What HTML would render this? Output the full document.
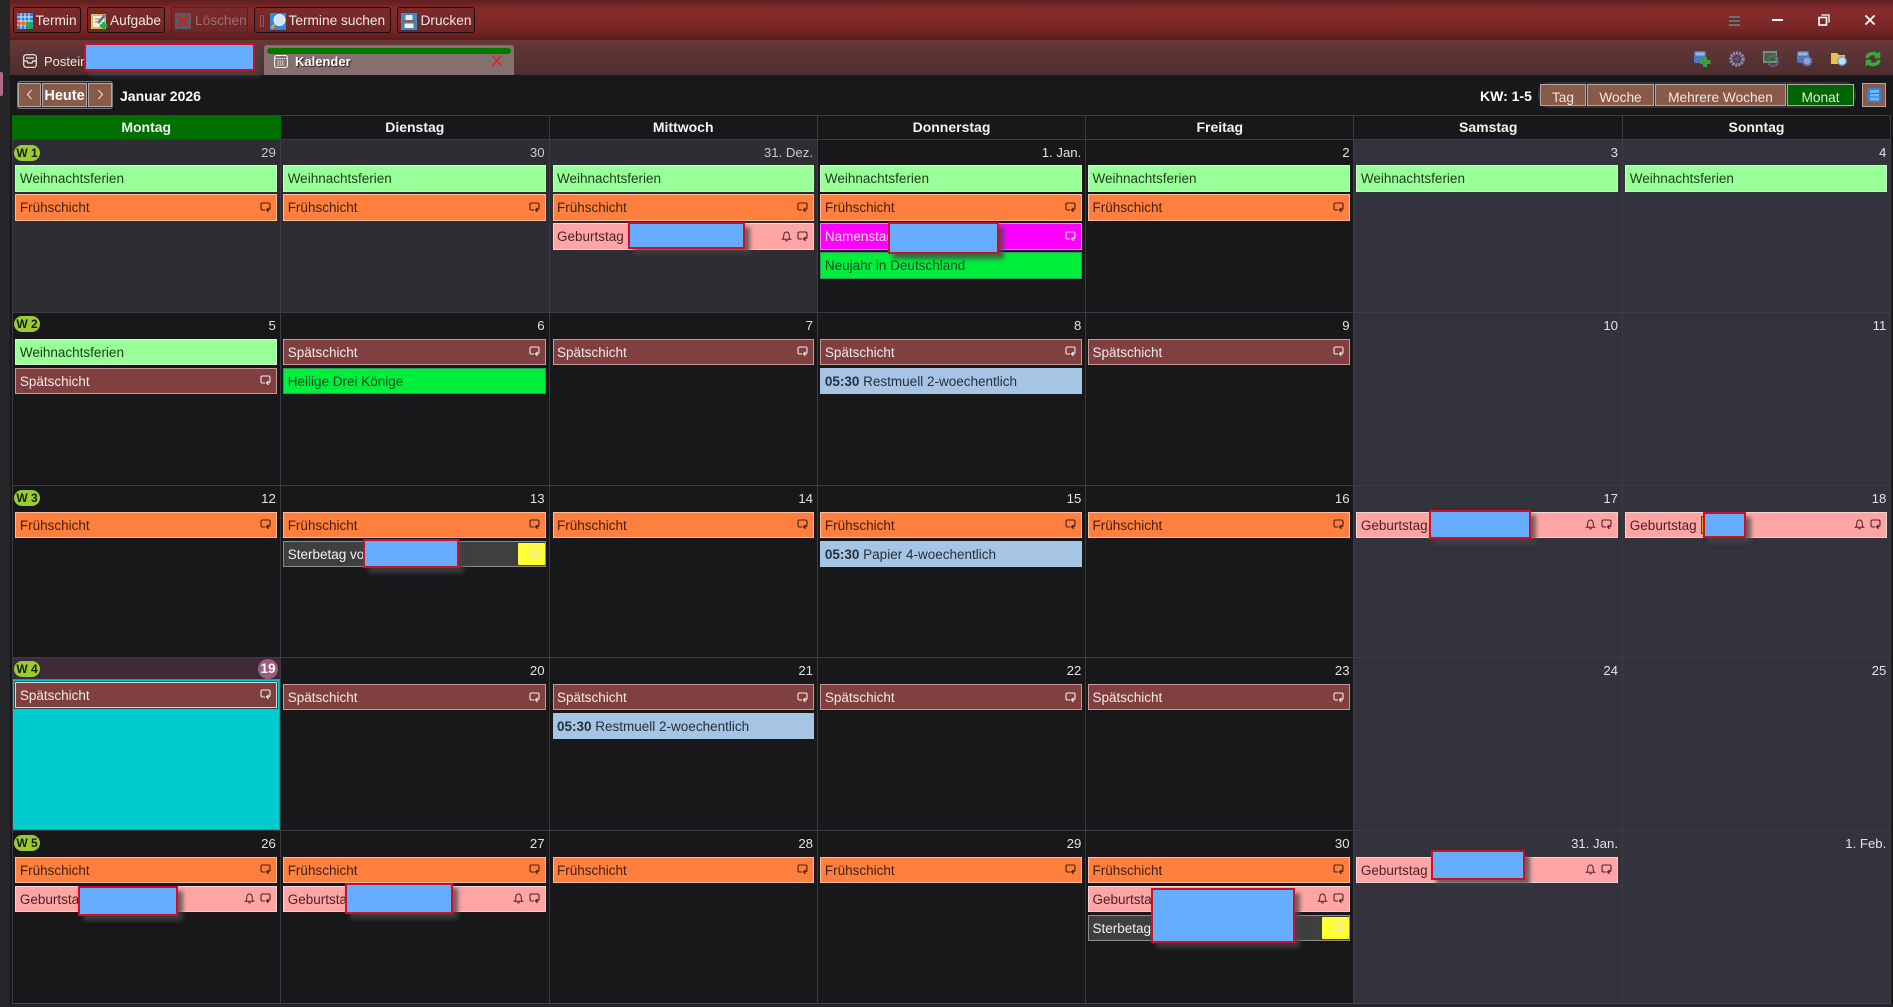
<!DOCTYPE html>
<html lang="de">
<head>
<meta charset="utf-8">
<title>Kalender</title>
<style>
html,body{margin:0;padding:0;width:1893px;height:1007px;overflow:hidden;background:#18181b}
body{position:relative;font-family:"Liberation Sans",sans-serif;font-size:13.5px;color:#eee}
div,span,svg{position:absolute;box-sizing:border-box}
b{font-weight:bold}
.tb{top:7px;height:26px;border:1px solid #1e0d0d;border-radius:3px;background:linear-gradient(#7b2a2a,#6e2626);color:#f4e6e6;line-height:26px;white-space:nowrap;font-size:13.7px}
.tb span{top:0}
.v{top:84px;height:22px;background:#8a5a48;border:1px solid #b0a8a4;color:#f0e4de;text-align:center;line-height:25px;font-size:13.7px}
.h{top:116px;height:23px;font-weight:bold;font-size:14px;text-align:center;line-height:23px;color:#f2f2f2;width:268.4px}
.l{background:#3b3b40}
.vl{top:115px;width:1px;height:888px}
.hl{left:12px;width:1879px;height:1px}
.d{height:16px;width:120px;text-align:right;line-height:16px;color:#e2e2e2;font-size:13.2px}
.dm{color:#cacaca}
.w{left:14px;width:26px;height:16px;border-radius:8px;background:#9acb34;color:#142000;font-weight:bold;font-size:12px;line-height:16.5px;text-align:center}
.e{height:26.4px;border:1px solid;padding-left:3.5px;line-height:26.5px;white-space:nowrap;overflow:hidden;font-size:13.5px}
.c1{left:15.4px;width:261.6px}.c2{left:283.2px;width:262.5px}.c3{left:552.5px;width:261.1px}.c4{left:820.4px;width:261.4px}.c5{left:1088px;width:261.6px}.c6{left:1356.4px;width:261.6px}.c7{left:1625.3px;width:261.4px}
.g{background:#99ff99;border-color:#cdf5cd;color:#1d3d1d}
.f{background:#ff7f3f;border-color:#ffbb99;color:#43200f}
.p{background:#ffa5a5;border-color:#f6d2d2;color:#4a2228}
.s{background:#804040;border-color:#c49a9a;color:#f6e8e8}
.n{background:#00ee3c;border-color:#2e9c58;color:#0c4a24}
.b{background:#a6c4e4;border-color:#a6c4e4;color:#26303c}
.m{background:#ff00ff;border-color:#ff77ff;color:#ffd8ff}
.t{background:#3f3f3f;border-color:#8c8c8c;color:#f0f0f0}
.y{right:0;top:1px;width:27px;height:22.4px;background:#ffff33;border-radius:1px}
.r{width:11px;height:11px;right:5px;top:6.5px;fill:none;stroke:currentColor;stroke-width:1.1}
.bl{width:11px;height:11px;right:21px;top:6.5px;fill:none;stroke:currentColor;stroke-width:1}
.x{background:#66adff;border:2px solid #cc1126;box-shadow:5px 5px 4px rgba(70,70,70,.75);z-index:5}
</style>
</head>
<body>
<svg width="0" height="0" style="position:absolute">
<symbol id="rp" viewBox="0 0 11 11"><path d="M5 8H2.500Q1 8 1 6.500V2.500Q1 1 2.500 1H8.500Q10 1 10 2.500V6Q10 7.900 8 7.900H6.600M8.600 5.900L6.400 7.900L8.600 9.900"/></symbol>
<symbol id="bl" viewBox="0 0 11 11"><path d="M1.500 8.300Q2.800 7.300 2.800 4.800Q2.800 1 5.500 1Q8.200 1 8.200 4.800Q8.200 7.300 9.500 8.300ZM4.300 9.300Q5.500 10.700 6.700 9.300"/></symbol>
</svg>

<!-- left strip -->
<div style="left:0;top:0;width:10px;height:1007px;background:#262628"></div>
<div style="left:0;top:72px;width:3px;height:24px;background:#b06a8a;border-radius:0 2px 2px 0"></div>

<!-- title bar -->
<div style="left:10px;top:0;width:1883px;height:40px;background:linear-gradient(#5e1f1f 0,#852c2b 25%,#7c2828 65%,#5c1c1c 100%)"></div>
<div class="tb" style="left:13px;width:68px"><span style="left:21.500px">Termin</span></div>
<svg style="left:17px;top:13px" width="17" height="17" viewBox="0 0 17 17"><rect width="16" height="16" fill="#2d7fd6"/><path d="M0 4H16M0 8H16M0 12H16M4 0V16M8 0V16M12 0V16" stroke="#dcecff" stroke-width="1"/><rect x="1" y="9" width="3" height="3" fill="#e8662a"/><rect x="5" y="9" width="3" height="3" fill="#e8662a"/><path d="M12.500 8.500V16M8.800 12.300H16.300" stroke="#20b040" stroke-width="3"/></svg>
<div class="tb" style="left:87px;width:78px"><span style="left:22px">Aufgabe</span></div>
<svg style="left:91px;top:13px" width="17" height="17" viewBox="0 0 17 17"><rect x="0" y="1" width="15" height="15" fill="#d9b95a"/><rect x="2" y="3" width="11" height="11" fill="#f2ecd8"/><path d="M4 6H10M4 9H8" stroke="#888"/><path d="M7 10L14 2" stroke="#50789c" stroke-width="2.500"/><path d="M12.500 9V16.500M8.800 12.800H16.300" stroke="#20b040" stroke-width="3"/></svg>
<div class="tb" style="left:171px;width:76.500px;border-color:#5a2020;color:#9a7070"><span style="left:23px">Löschen</span></div>
<svg style="left:175px;top:13px" width="16" height="16" viewBox="0 0 16 16"><rect width="16" height="16" fill="#5a5a68"/><path d="M2.500 2.500L13.500 13.500M13.500 2.500L2.500 13.500" stroke="#a83030" stroke-width="3.200"/></svg>
<div class="tb" style="left:254px;width:137px"><span style="left:33.500px">Termine suchen</span></div>
<div style="left:260px;top:15px;width:4px;height:12px;border:1px solid #8c5a5a;border-radius:1px"></div>
<svg style="left:270px;top:13px" width="16" height="17" viewBox="0 0 16 17"><rect width="16" height="17" fill="#2f8ae0"/><circle cx="9.500" cy="7" r="5.500" fill="#cfe6fb" stroke="#e8f4ff"/><path d="M5 11L1.500 15.500" stroke="#e0a040" stroke-width="2.500"/></svg>
<div class="tb" style="left:397px;width:78px"><span style="left:22.500px">Drucken</span></div>
<svg style="left:401px;top:13px" width="16" height="17" viewBox="0 0 16 17"><rect width="16" height="17" fill="#3b8ccc"/><rect x="4.500" y="2" width="7" height="5" fill="#e8e8e8"/><rect x="1.500" y="7" width="13" height="6" fill="#6e6e70"/><rect x="3.500" y="10.500" width="9" height="4.500" fill="#f2f2f2"/></svg>

<!-- window controls -->
<div style="left:1729px;top:16px;width:11px;height:10px;background:repeating-linear-gradient(#7a6a6a 0,#7a6a6a 2px,#5a3030 2px,#5a3030 4px)"></div>
<div style="left:1772px;top:19px;width:11px;height:2px;background:#fff"></div>
<svg style="left:1818px;top:14px" width="12" height="12" viewBox="0 0 12 12"><rect x="1" y="3.500" width="7.500" height="7.500" fill="none" stroke="#fff" stroke-width="1.600"/><path d="M3.500 1H11V8.500" fill="none" stroke="#fff" stroke-width="1.300"/></svg>
<svg style="left:1864px;top:14px" width="12" height="12" viewBox="0 0 12 12"><path d="M1.500 1.500L10.500 10.500M10.500 1.500L1.500 10.500" stroke="#fff" stroke-width="1.800"/></svg>

<!-- tab bar -->
<div style="left:10px;top:40px;width:1883px;height:35px;background:linear-gradient(#683838,#4c2e2e)"></div>
<svg style="left:23px;top:54px" width="14" height="14" viewBox="0 0 14 14" fill="none" stroke="#eee" stroke-width="1.200"><rect x=".7" y=".7" width="12.600" height="12.600" rx="2.500"/><path d="M.7 7H4L5 9H9L10 7H13.300M3 4H11"/></svg>
<div style="left:44px;top:54px;line-height:15px;color:#f2e6e6;font-size:13px;white-space:nowrap">Postein</div>
<div class="x" style="left:84px;top:43px;width:171px;height:28px"></div>
<div style="left:264px;top:45px;width:249.600px;height:30px;background:#86706f;border-radius:3px 3px 0 0"></div>
<div style="left:267px;top:48px;width:244px;height:6px;background:#007800;border-radius:3px"></div>
<svg style="left:274px;top:54px" width="14" height="14" viewBox="0 0 14 14" fill="none" stroke="#f2f2f2" stroke-width="1.100"><rect x=".6" y="1.500" width="12.800" height="12" rx="2"/><path d="M.6 4.500H13.400M3.500 7H10.500M3.500 9H10.500M3.500 11H10.500" stroke-dasharray="1.500 .8"/></svg>
<div style="left:295px;top:54px;line-height:16px;font-weight:bold;color:#fff;font-size:13px;text-shadow:1px 1px 1px #2a1a1a;white-space:nowrap">Kalender</div>
<svg style="left:492px;top:55px" width="10" height="11" viewBox="0 0 10 11"><path d="M.5 .5L9.500 10.500M9.500 .5L.5 10.500" stroke="#e02020" stroke-width="1.400"/></svg>

<!-- right tab icons -->
<svg style="left:1694px;top:51px" width="18" height="16" viewBox="0 0 18 16"><rect width="12" height="12" rx="2" fill="#4a7cc4"/><rect x="1.500" y="1.500" width="9" height="3" fill="#9ab8e2"/><path d="M8 6H13V9H16.500V13H13V16H9V13H6V9H8Z" fill="#3f9a4a"/></svg>
<svg style="left:1729px;top:51px" width="16" height="16" viewBox="0 0 16 16"><circle cx="8" cy="8" r="6" fill="none" stroke="#8f86b0" stroke-width="3.500" stroke-dasharray="2.200 .8"/><circle cx="8" cy="8" r="2.800" fill="#5a5280"/></svg>
<svg style="left:1763px;top:51px" width="16" height="16" viewBox="0 0 16 16"><rect width="14" height="12" fill="#6a9a70"/><rect x="1.500" y="2" width="11" height="8" fill="#3f6048"/><circle cx="10" cy="10" r="5" fill="none" stroke="#6a6488" stroke-width="2.500" stroke-dasharray="2 .8"/></svg>
<svg style="left:1797px;top:51px" width="16" height="16" viewBox="0 0 16 16"><rect width="12" height="12" rx="2" fill="#4a7cc4"/><rect x="1.500" y="1.500" width="9" height="3" fill="#9ab8e2"/><circle cx="10" cy="10" r="4.500" fill="#7fa4d8" stroke="#6c6490" stroke-width="2.200" stroke-dasharray="2 .8"/></svg>
<svg style="left:1831px;top:51px" width="17" height="16" viewBox="0 0 17 16"><path d="M0 2H6L8 4H14V13H0Z" fill="#e8c050"/><circle cx="11" cy="10" r="4.200" fill="#bfe0f8" stroke="#6da0cc" stroke-width="1.300"/></svg>
<svg style="left:1865px;top:51px" width="16" height="16" viewBox="0 0 16 16" fill="none" stroke="#2fae3f" stroke-width="3.500"><path d="M2 7Q3 2.500 8 2.500Q11 2.500 13 5"/><path d="M14 9Q13 13.500 8 13.500Q5 13.500 3 11"/><path d="M14.500 1V6.500H9.500M1.500 15V9.500H6.500" stroke-width="1.500" fill="#2fae3f"/></svg>

<!-- nav row -->
<div style="left:17px;top:81px;width:96px;height:28px;border:1px solid #77777c;border-radius:3px;background:#2a2a2e"></div>
<div class="v" style="left:17.500px;width:23px;top:83px;height:24px"><svg style="left:7px;top:5px" width="7" height="11" viewBox="0 0 7 11"><path d="M5.500 1L1.500 5.500L5.500 10" fill="none" stroke="#f0e0dc" stroke-width="1"/></svg></div>
<div class="v" style="left:42px;width:45px;top:83px;height:24px;font-weight:bold;color:#fff;line-height:24px;font-size:14.500px">Heute</div>
<div class="v" style="left:88px;width:24px;top:83px;height:24px"><svg style="left:8px;top:5px" width="7" height="11" viewBox="0 0 7 11"><path d="M1.500 1L5.500 5.500L1.500 10" fill="none" stroke="#f0e0dc" stroke-width="1"/></svg></div>
<div style="left:120px;top:88px;line-height:16px;font-weight:bold;color:#fff;font-size:14px;white-space:nowrap">Januar 2026</div>

<div style="left:1480px;top:88px;line-height:16px;font-weight:bold;color:#fff;font-size:14px;white-space:nowrap">KW: 1-5</div>
<div style="left:1538px;top:82px;width:318px;height:26px;border-radius:11px;background:#333336"></div>
<div class="v" style="left:1540px;width:46px">Tag</div>
<div class="v" style="left:1587px;width:67px">Woche</div>
<div class="v" style="left:1655px;width:131px">Mehrere Wochen</div>
<div class="v" style="left:1787px;width:67px;background:#006400;color:#d8f0d8">Monat</div>
<div class="v" style="left:1862px;width:24px;top:83px;height:24px"></div>
<svg style="left:1867px;top:88px" width="14" height="14" viewBox="0 0 14 14"><rect width="14" height="14" rx="3" fill="#2c84e8"/><path d="M3 2H12V12.500H3" fill="#6cb8f8"/><path d="M3 5.500H12M3 9H12" stroke="#2a78d8"/></svg>

<!-- grid backgrounds -->
<div style="left:12px;top:139.300px;width:805.300px;height:173px;background:#2d2d33"></div>
<div style="left:1354px;top:139.300px;width:537px;height:864px;background:#33333d"></div>

<!-- today -->
<div style="left:12px;top:657.600px;width:268.600px;height:21.400px;background:#3f2a38"></div>
<div style="left:12px;top:679px;width:267.500px;height:150.500px;background:#00ccd0;border:1px solid #3a8f94"></div>

<!-- grid lines -->
<div class="hl l" style="top:115px"></div>
<div class="hl l" style="top:139px"></div>
<div class="hl l" style="top:312px"></div>
<div class="hl l" style="top:485px"></div>
<div class="hl l" style="top:657px"></div>
<div class="hl l" style="top:830px"></div>
<div class="hl" style="top:1003px;background:#46464c;height:1px"></div>
<div style="left:10px;top:1004px;width:1883px;height:3px;background:#242428"></div>
<div class="vl l" style="left:12px"></div>
<div class="vl l" style="left:280px"></div>
<div class="vl l" style="left:549px"></div>
<div class="vl l" style="left:817px"></div>
<div class="vl l" style="left:1085px"></div>
<div class="vl l" style="left:1353px"></div>
<div class="vl l" style="left:1622px"></div>
<div class="vl l" style="left:1890px"></div>

<!-- headers -->
<div style="left:12px;top:116px;width:268.600px;height:23px;background:#007000"></div>
<div class="h" style="left:12px">Montag</div>
<div class="h" style="left:280.600px">Dienstag</div>
<div class="h" style="left:549px">Mittwoch</div>
<div class="h" style="left:817.300px">Donnerstag</div>
<div class="h" style="left:1085.600px">Freitag</div>
<div class="h" style="left:1354px">Samstag</div>
<div class="h" style="left:1622.300px">Sonntag</div>

<!-- week badges -->
<div class="w" style="top:145px">W 1</div>
<div class="w" style="top:316px">W 2</div>
<div class="w" style="top:490px">W 3</div>
<div class="w" style="top:661px">W 4</div>
<div class="w" style="top:835px">W 5</div>

<!-- dates row 1 -->
<div class="d dm" style="left:155.800px;top:145px">29</div>
<div class="d dm" style="left:424.600px;top:145px">30</div>
<div class="d dm" style="left:693px;top:145px">31. Dez.</div>
<div class="d" style="left:961.300px;top:145px">1. Jan.</div>
<div class="d" style="left:1229.600px;top:145px">2</div>
<div class="d" style="left:1498px;top:145px">3</div>
<div class="d" style="left:1766.300px;top:145px">4</div>
<!-- row 2 -->
<div class="d" style="left:155.800px;top:318px">5</div>
<div class="d" style="left:424.600px;top:318px">6</div>
<div class="d" style="left:693px;top:318px">7</div>
<div class="d" style="left:961.300px;top:318px">8</div>
<div class="d" style="left:1229.600px;top:318px">9</div>
<div class="d" style="left:1498px;top:318px">10</div>
<div class="d" style="left:1766.300px;top:318px">11</div>
<!-- row 3 -->
<div class="d" style="left:155.800px;top:491px">12</div>
<div class="d" style="left:424.600px;top:491px">13</div>
<div class="d" style="left:693px;top:491px">14</div>
<div class="d" style="left:961.300px;top:491px">15</div>
<div class="d" style="left:1229.600px;top:491px">16</div>
<div class="d" style="left:1498px;top:491px">17</div>
<div class="d" style="left:1766.300px;top:491px">18</div>
<!-- row 4 -->
<div style="left:258px;top:659px;width:20px;height:20px;border-radius:50%;background:#9c5c7f;color:#fff;font-weight:bold;font-size:13.500px;line-height:20px;text-align:center">19</div>
<div class="d" style="left:424.600px;top:663px">20</div>
<div class="d" style="left:693px;top:663px">21</div>
<div class="d" style="left:961.300px;top:663px">22</div>
<div class="d" style="left:1229.600px;top:663px">23</div>
<div class="d" style="left:1498px;top:663px">24</div>
<div class="d" style="left:1766.300px;top:663px">25</div>
<!-- row 5 -->
<div class="d" style="left:155.800px;top:836px">26</div>
<div class="d" style="left:424.600px;top:836px">27</div>
<div class="d" style="left:693px;top:836px">28</div>
<div class="d" style="left:961.300px;top:836px">29</div>
<div class="d" style="left:1229.600px;top:836px">30</div>
<div class="d" style="left:1498px;top:836px">31. Jan.</div>
<div class="d" style="left:1766.300px;top:836px">1. Feb.</div>

<!-- events row 1 -->
<div class="e c1 g" style="top:165.300px">Weihnachtsferien</div>
<div class="e c2 g" style="top:165.300px">Weihnachtsferien</div>
<div class="e c3 g" style="top:165.300px">Weihnachtsferien</div>
<div class="e c4 g" style="top:165.300px">Weihnachtsferien</div>
<div class="e c5 g" style="top:165.300px">Weihnachtsferien</div>
<div class="e c6 g" style="top:165.300px">Weihnachtsferien</div>
<div class="e c7 g" style="top:165.300px">Weihnachtsferien</div>
<div class="e c1 f" style="top:194.300px">Frühschicht<svg class="r"><use href="#rp"/></svg></div>
<div class="e c2 f" style="top:194.300px">Frühschicht<svg class="r"><use href="#rp"/></svg></div>
<div class="e c3 f" style="top:194.300px">Frühschicht<svg class="r"><use href="#rp"/></svg></div>
<div class="e c4 f" style="top:194.300px">Frühschicht<svg class="r"><use href="#rp"/></svg></div>
<div class="e c5 f" style="top:194.300px">Frühschicht<svg class="r"><use href="#rp"/></svg></div>
<div class="e c3 p" style="top:223.300px">Geburtstag<svg class="bl"><use href="#bl"/></svg><svg class="r"><use href="#rp"/></svg></div>
<div class="e c4 m" style="top:223.300px">Namenstag<svg class="r"><use href="#rp"/></svg></div>
<div class="e c4 n" style="top:252.300px">Neujahr in Deutschland</div>

<!-- events row 2 -->
<div class="e c1 g" style="top:338.500px">Weihnachtsferien</div>
<div class="e c2 s" style="top:338.500px">Spätschicht<svg class="r"><use href="#rp"/></svg></div>
<div class="e c3 s" style="top:338.500px">Spätschicht<svg class="r"><use href="#rp"/></svg></div>
<div class="e c4 s" style="top:338.500px">Spätschicht<svg class="r"><use href="#rp"/></svg></div>
<div class="e c5 s" style="top:338.500px">Spätschicht<svg class="r"><use href="#rp"/></svg></div>
<div class="e c1 s" style="top:367.500px">Spätschicht<svg class="r"><use href="#rp"/></svg></div>
<div class="e c2 n" style="top:367.500px">Heilige Drei Könige</div>
<div class="e c4 b" style="top:367.500px"><b>05:30</b> Restmuell 2-woechentlich</div>

<!-- events row 3 -->
<div class="e c1 f" style="top:511.500px">Frühschicht<svg class="r"><use href="#rp"/></svg></div>
<div class="e c2 f" style="top:511.500px">Frühschicht<svg class="r"><use href="#rp"/></svg></div>
<div class="e c3 f" style="top:511.500px">Frühschicht<svg class="r"><use href="#rp"/></svg></div>
<div class="e c4 f" style="top:511.500px">Frühschicht<svg class="r"><use href="#rp"/></svg></div>
<div class="e c5 f" style="top:511.500px">Frühschicht<svg class="r"><use href="#rp"/></svg></div>
<div class="e c6 p" style="top:511.500px">Geburtstag<svg class="bl"><use href="#bl"/></svg><svg class="r"><use href="#rp"/></svg></div>
<div class="e c7 p" style="top:511.500px">Geburtstag<svg class="bl"><use href="#bl"/></svg><svg class="r"><use href="#rp"/></svg></div>
<div class="e c2 t" style="top:540.500px">Sterbetag von<div class="y"></div><svg class="r" style="color:#e4e4d4;z-index:1;stroke-width:1.300"><use href="#rp"/></svg></div>
<div class="e c4 b" style="top:540.500px"><b>05:30</b> Papier 4-woechentlich</div>

<!-- events row 4 -->
<div class="e c1 s" style="top:681.700px;border-color:#d8d8d8;outline:1px solid #274f52">Spätschicht<svg class="r"><use href="#rp"/></svg></div>
<div class="e c2 s" style="top:684px">Spätschicht<svg class="r"><use href="#rp"/></svg></div>
<div class="e c3 s" style="top:684px">Spätschicht<svg class="r"><use href="#rp"/></svg></div>
<div class="e c4 s" style="top:684px">Spätschicht<svg class="r"><use href="#rp"/></svg></div>
<div class="e c5 s" style="top:684px">Spätschicht<svg class="r"><use href="#rp"/></svg></div>
<div class="e c3 b" style="top:713px;left:552.500px"><b>05:30</b> Restmuell 2-woechentlich</div>

<!-- events row 5 -->
<div class="e c1 f" style="top:856.700px">Frühschicht<svg class="r"><use href="#rp"/></svg></div>
<div class="e c2 f" style="top:856.700px">Frühschicht<svg class="r"><use href="#rp"/></svg></div>
<div class="e c3 f" style="top:856.700px">Frühschicht<svg class="r"><use href="#rp"/></svg></div>
<div class="e c4 f" style="top:856.700px">Frühschicht<svg class="r"><use href="#rp"/></svg></div>
<div class="e c5 f" style="top:856.700px">Frühschicht<svg class="r"><use href="#rp"/></svg></div>
<div class="e c6 p" style="top:856.700px">Geburtstag<svg class="bl"><use href="#bl"/></svg><svg class="r"><use href="#rp"/></svg></div>
<div class="e c1 p" style="top:885.500px">Geburtstag<svg class="bl"><use href="#bl"/></svg><svg class="r"><use href="#rp"/></svg></div>
<div class="e c2 p" style="top:885.500px">Geburtstag<svg class="bl"><use href="#bl"/></svg><svg class="r"><use href="#rp"/></svg></div>
<div class="e c5 p" style="top:885.500px">Geburtstag<svg class="bl"><use href="#bl"/></svg><svg class="r"><use href="#rp"/></svg></div>
<div class="e c5 t" style="top:914.700px">Sterbetag von<div class="y"></div><svg class="r" style="color:#e4e4d4;z-index:1;stroke-width:1.300"><use href="#rp"/></svg></div>

<!-- redactions -->
<div class="x" style="left:627.500px;top:222px;width:117px;height:27.300px"></div>
<div class="x" style="left:888px;top:222px;width:110.600px;height:32px"></div>
<div class="x" style="left:363px;top:539.300px;width:96px;height:28.400px"></div>
<div class="x" style="left:1429px;top:510px;width:102px;height:28.700px"></div>
<div style="left:1700.500px;top:516px;width:4px;height:18px;background:#c9a020;border:1px solid #cc1126;z-index:4"></div>
<div class="x" style="left:1703px;top:512.300px;width:42.600px;height:25.400px"></div>
<div class="x" style="left:77.500px;top:886px;width:100.500px;height:30px"></div>
<div class="x" style="left:345.400px;top:883px;width:107.600px;height:30.700px"></div>
<div class="x" style="left:1151.400px;top:887.700px;width:143.600px;height:55px"></div>
<div class="x" style="left:1431px;top:850.300px;width:94px;height:29.400px"></div>
</body>
</html>
